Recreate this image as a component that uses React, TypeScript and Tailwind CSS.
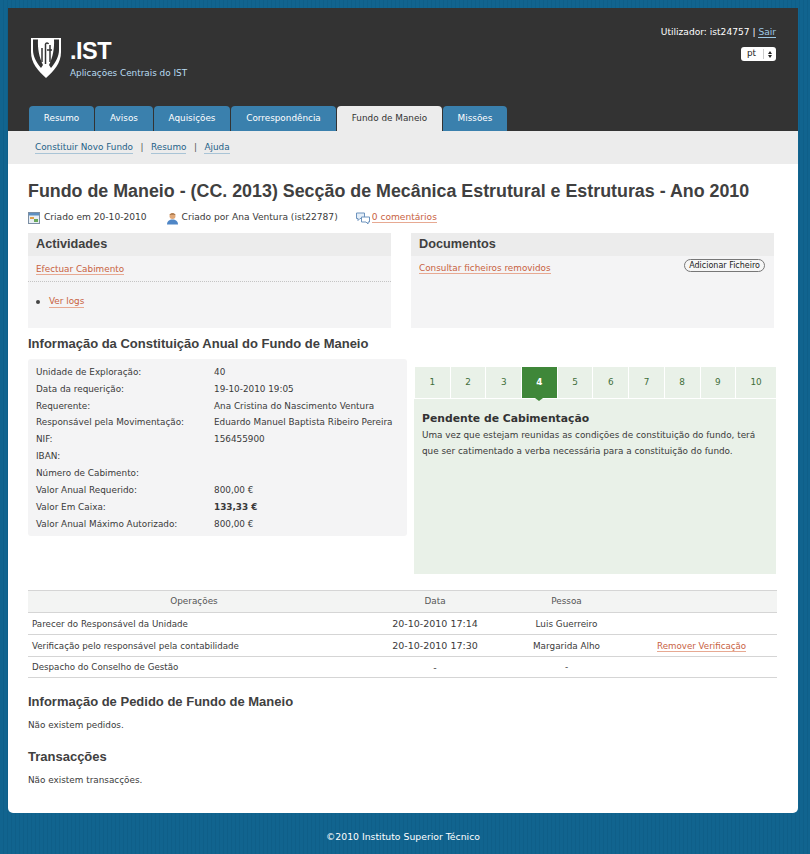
const tabs = [
  { label: "Resumo", w: "w-[65px]" },
  { label: "Avisos", w: "w-[58px]" },
  { label: "Aquisições", w: "w-[76px]" },
  { label: "Correspondência", w: "w-[105px]" },
  { label: "Fundo de Maneio", w: "w-[105px]", active: true },
  { label: "Missões", w: "w-[64px]" },
];

const infoRows = [
  ["Unidade de Exploração:", "40"],
  ["Data da requerição:", "19-10-2010 19:05"],
  ["Requerente:", "Ana Cristina do Nascimento Ventura"],
  ["Responsável pela Movimentação:", "Eduardo Manuel Baptista Ribeiro Pereira"],
  ["NIF:", "156455900"],
  ["IBAN:", ""],
  ["Número de Cabimento:", ""],
  ["Valor Anual Requerido:", "800,00 €"],
  ["Valor Em Caixa:", "133,33 €"],
  ["Valor Anual Máximo Autorizado:", "800,00 €"],
];

const steps = ["1", "2", "3", "4", "5", "6", "7", "8", "9", "10"];

const operations = [
  { name: "Parecer do Responsável da Unidade", date: "20-10-2010 17:14", person: "Luis Guerreiro", h: "h-[22px]" },
  { name: "Verificação pelo responsável pela contabilidade", date: "20-10-2010 17:30", person: "Margarida Alho", action: "Remover Verificação", h: "h-[22px]" },
  { name: "Despacho do Conselho de Gestão", date: "-", person: "-", h: "h-[21px]" },
];

function Logo() {
  return (
    <svg width="32" height="42" viewBox="0 0 32 42" className="shrink-0">
      <path d="M1 1H31V15C31 26 24 34 16 41C8 34 1 26 1 15Z" fill="#fff" />
      <path d="M3 2.5H8C7.5 11 9 20 13 28L11 31C6 25 3 19 3 13Z" fill="#333" />
      <path d="M29 2.5H24C24.5 11 23 20 19 28L21 31C26 25 29 19 29 13Z" fill="#333" />
      <path d="M12 11V25M15.5 7V27M15.5 7C16 5.5 18 5.5 18.5 7M17 13H22M20 8V25" stroke="#333" strokeWidth="1.5" fill="none" />
    </svg>
  );
}

function Calendar() {
  return (
    <svg width="12" height="12" viewBox="0 0 12 12" className="shrink-0">
      <rect x="0.5" y="0.5" width="11" height="11" fill="#e8eef4" stroke="#7b8ea3" />
      <rect x="1" y="1" width="10" height="2.5" fill="#5f8fc0" />
      <rect x="2" y="5" width="4" height="2" fill="#e0a04a" />
      <rect x="6" y="7" width="4" height="3" fill="#69a85a" />
    </svg>
  );
}

function Person() {
  return (
    <svg width="13" height="13" viewBox="0 0 13 13" className="shrink-0">
      <circle cx="6.5" cy="4" r="3" fill="#e0a878" />
      <path d="M3.5 3C4 1 9 1 9.5 3C8 2.4 5 2.4 3.5 3Z" fill="#8a5a30" />
      <path d="M1 12.5C1 9 3.5 7.5 6.5 7.5C9.5 7.5 12 9 12 12.5Z" fill="#4f86c6" />
    </svg>
  );
}

function Comments() {
  return (
    <svg width="14" height="13" viewBox="0 0 14 13" className="shrink-0">
      <path d="M0.5 1H8.5V6.5H4L2 8.5V6.5H0.5Z" fill="#e4eef8" stroke="#6d93bd" />
      <path d="M5.5 5H13.5V10H12V12L10 10H5.5Z" fill="#fff" stroke="#6d93bd" />
    </svg>
  );
}

function Panel({ title, children }: any) {
  return (
    <div className="h-[95px] w-[363px] bg-[#f4f4f5]">
      <div className="flex h-[23px] items-center bg-[#ececec] pl-2 font-['Liberation_Sans',sans-serif] text-[12.7px] font-bold text-[#404040]">
        {title}
      </div>
      {children}
    </div>
  );
}

function RedLink({ children }: any) {
  return <span className="border-b border-[#e7a992] leading-[11px] text-[#c8623f]">{children}</span>;
}

function BlueLink({ children }: any) {
  return <span className="border-b border-[#a9c4d6] leading-[11px] text-[#1f6288]">{children}</span>;
}

export default function App() {
  return (
    <div className="h-[854px] overflow-hidden bg-[#11648f] bg-[repeating-linear-gradient(90deg,#11648f_0px,#11648f_3px,#0f5f89_3px,#0f5f89_4px)] pt-2 pl-2 font-['DejaVu_Sans',sans-serif] text-[8.85px] text-[#3a3a3a]">
      <div className="h-[805px] w-[790px] overflow-hidden rounded-b-[5px] bg-white">
        {/* header */}
        <div className="h-[123px] bg-[#333]">
          <div className="flex h-[98px] justify-between pr-[22px] pl-[22px]">
            <div className="flex pt-[29px]">
              <Logo />
              <div className="pl-2">
                <div className="font-['Liberation_Sans',sans-serif] text-[23.5px] leading-[28px] font-bold tracking-[-0.5px] text-white">
                  .IST
                </div>
                <div className="pt-[2px] text-[#b9dcf2]">Aplicações Centrais do IST</div>
              </div>
            </div>
            <div className="flex flex-col items-end pt-[18px]">
              <div className="text-[9.1px] leading-[12px] text-white">
                Utilizador: ist24757 | <span className="border-b border-[#9cc9e6] text-[#9cc9e6]">Sair</span>
              </div>
              <div className="mt-[9px] flex h-[14px] w-[35px] items-center rounded-[3px] bg-white pl-[6px] text-[#222]">
                pt
                <span className="ml-auto flex h-[10px] w-[13px] flex-col items-center justify-center gap-[1px] border-l border-[#ccc]">
                  <span className="h-0 w-0 border-x-[2.5px] border-b-[3px] border-x-transparent border-b-[#222]"></span>
                  <span className="h-0 w-0 border-x-[2.5px] border-t-[3px] border-x-transparent border-t-[#222]"></span>
                </span>
              </div>
            </div>
          </div>
          <div className="flex h-[25px] gap-px pl-[21px]">
            {tabs.map((tab) => (
              <div
                key={tab.label}
                className={`flex items-center justify-center rounded-t-[4px] pt-px ${tab.w} ${
                  tab.active ? "bg-[#ececec] text-[#333]" : "bg-[#3a80ad] text-white"
                }`}
              >
                {tab.label}
              </div>
            ))}
          </div>
        </div>

        {/* sub nav */}
        <div className="flex h-[33px] items-center bg-[#ececec] pl-[27px]">
          <BlueLink>Constituir Novo Fundo</BlueLink>
          <span className="px-[7.5px] text-[#555]">|</span>
          <BlueLink>Resumo</BlueLink>
          <span className="px-[7.5px] text-[#555]">|</span>
          <BlueLink>Ajuda</BlueLink>
        </div>

        <div className="pl-5">
          <h1 className="pt-[16px] font-['Liberation_Sans',sans-serif] text-[17.85px] leading-[22px] font-bold text-[#404040]">
            Fundo de Maneio - (CC. 2013) Secção de Mecânica Estrutural e Estruturas - Ano 2010
          </h1>

          <div className="mt-[9px] flex h-[14px] items-center text-[9.1px]">
            <Calendar />
            <span className="pl-[4px]">Criado em 20-10-2010</span>
            <span className="w-[19px]"></span>
            <Person />
            <span className="pl-[3px]">Criado por Ana Ventura (ist22787)</span>
            <span className="w-[18px]"></span>
            <Comments />
            <span className="pl-[2px]"><RedLink>0 comentários</RedLink></span>
          </div>

          <div className="mt-[8px] flex gap-5">
            <Panel title="Actividades">
              <div className="h-[26px] border-b border-dotted border-[#c4c4c4] pt-[7px] pl-2">
                <RedLink>Efectuar Cabimento</RedLink>
              </div>
              <ul className="pt-[14px] pl-2">
                <li className="flex items-center">
                  <span className="mr-[9px] h-[4px] w-[4px] rounded-full bg-[#444]"></span>
                  <RedLink>Ver logs</RedLink>
                </li>
              </ul>
            </Panel>
            <Panel title="Documentos">
              <div className="flex items-start justify-between pt-[3px] pr-[9px] pl-2">
                <span className="pt-[3px]"><RedLink>Consultar ficheiros removidos</RedLink></span>
                <button className="flex h-[13px] items-center rounded-full border border-[#777] bg-[#f6f6f6] px-[4px] text-[8px] text-[#222]">
                  Adicionar Ficheiro
                </button>
              </div>
            </Panel>
          </div>

          <h2 className="pt-[8px] font-['Liberation_Sans',sans-serif] text-[13px] leading-[16px] font-bold text-[#404040]">
            Informação da Constituição Anual do Fundo de Maneio
          </h2>

          <div className="mt-[7px] flex">
            <div className="h-[177px] w-[379px] rounded-[3px] bg-[#f4f4f5] pt-[5px] pl-2">
              {infoRows.map(([label, value]) => (
                <div key={label} className="flex h-[16.9px] items-center">
                  <span className="w-[178px] shrink-0">{label}</span>
                  <span className={`whitespace-nowrap ${label === "Valor Em Caixa:" ? "font-bold" : ""}`}>{value}</span>
                </div>
              ))}
            </div>

            <div className="ml-[7px] flex h-[215px] w-[362px] flex-col pt-2">
              <div className="flex h-[31px] gap-px pl-px">
                {steps.map((step) => (
                  <div
                    key={step}
                    className={`relative flex items-center justify-center ${step === "10" ? "flex-1" : "w-[34.7px]"} ${
                      step === "4" ? "bg-[#3f8739] font-bold text-white" : "bg-[#e9f1e8] text-[#3f6e3a]"
                    }`}
                  >
                    {step}
                    {step === "4" && (
                      <span className="absolute top-full left-1/2 -ml-[4px] h-0 w-0 border-x-[4px] border-t-[3px] border-x-transparent border-t-[#3f8739]"></span>
                    )}
                  </div>
                ))}
              </div>
              <div className="flex-1 border-t border-white bg-[#e9f1e8] px-2 pt-[13px]">
                <div className="text-[10.8px] leading-[14px] font-bold text-[#333]">Pendente de Cabimentação</div>
                <p className="whitespace-nowrap pt-[1px] leading-[16px] text-[#3a3a3a]">
                  Uma vez que estejam reunidas as condições de constituição do fundo, terá
                  <br />
                  que ser catimentado a verba necessária para a constituição do fundo.
                </p>
              </div>
            </div>
          </div>

          <div className="mt-[16px] w-[749px]">
            <div className="flex h-[23px] items-center border-y border-[#d5d5d5] bg-[#f3f4f3] pt-px text-[#555]">
              <span className="w-[332px] text-center">Operações</span>
              <span className="w-[150px] text-center">Data</span>
              <span className="w-[113px] text-center">Pessoa</span>
            </div>
            {operations.map((op) => (
              <div key={op.name} className={`flex items-center border-b border-[#d5d5d5] pt-[2px] ${op.h}`}>
                <span className="w-[332px] pl-[4px] text-[8.7px]">{op.name}</span>
                <span className="w-[150px] text-center text-[9.5px]">{op.date}</span>
                <span className="w-[113px] text-center">{op.person}</span>
                {op.action && (
                  <span className="pl-[34px] text-[8.7px]"><RedLink>{op.action}</RedLink></span>
                )}
              </div>
            ))}
          </div>

          <h2 className="pt-[16px] font-['Liberation_Sans',sans-serif] text-[13px] leading-[16px] font-bold text-[#404040]">
            Informação de Pedido de Fundo de Maneio
          </h2>
          <p className="pt-[8px] leading-[14px]">Não existem pedidos.</p>
          <h2 className="pt-[17px] font-['Liberation_Sans',sans-serif] text-[13px] leading-[16px] font-bold text-[#404040]">
            Transacções
          </h2>
          <p className="pt-[8px] leading-[14px]">Não existem transacções.</p>
        </div>
      </div>

      {/* footer */}
      <div className="w-[790px] pt-[18px] text-center text-[9.3px] leading-[12px] text-white">©2010 Instituto Superior Técnico</div>
    </div>
  );
}
